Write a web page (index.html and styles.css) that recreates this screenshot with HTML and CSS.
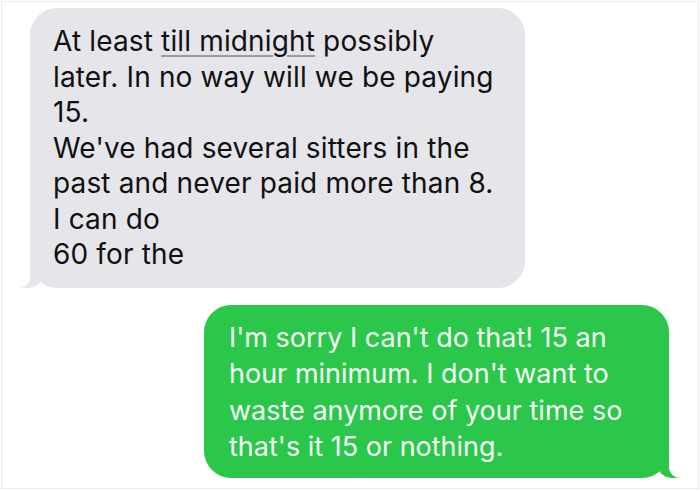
FILE: index.html
```html
<!DOCTYPE html>
<html lang="en">
<head>
    <meta charset="UTF-8">
    <meta name="viewport" content="width=device-width, initial-scale=1.0">
    <title>Messages</title>
    <link rel="stylesheet" href="styles.css">
</head>
<body>

    <div class="thread">
        <div class="bubble received">
            At least <span class="link">till midnight</span> possibly<br>
            later. In no way will we be paying<br>
            15.<br>
            We've had several sitters in the<br>
            past and never paid more than 8.<br>
            I can do<br>
            60 for the
        </div>

        <div class="bubble sent">
            I'm sorry I can't do that! 15 an<br>
            hour minimum. I don't want to<br>
            waste anymore of your time so<br>
            that's it 15 or nothing.
        </div>
    </div>

</body>
</html>
```

FILE: styles.css
```css
body {
    margin: 0;
    background-color: #ffffff;
    font-family: Inter, "Noto Sans", "Liberation Sans", sans-serif;
}
.thread {
    box-sizing: border-box;
    width: 698px;
    height: 488px;
    margin: 1px;
    border: 1px solid #ececec;
    display: flex;
    flex-direction: column;
    align-items: flex-start;
    gap: 17px;
    padding: 6px 29px 0 28px;
}
.bubble {
    position: relative;
    box-sizing: border-box;
    border-radius: 27px;
    font-size: 28px;
    white-space: nowrap;
}
.received {
    width: 495px;
    padding: 16px 20px 15px 23px;
    line-height: 35.5px;
    letter-spacing: 0.15px;
    background-color: #e5e5ea;
    color: #111111;
}
.sent {
    align-self: flex-end;
    width: 465px;
    padding: 15px 20px 12px 25px;
    font-size: 27px;
    line-height: 36.5px;
    background-color: #2bc74b;
    color: #f6fff6;
}
.link {
    text-decoration: underline;
    text-decoration-color: #9a9aa0;
    text-decoration-thickness: 2px;
    text-underline-offset: 4px;
}

/* bubble tails: a coloured block with a white mask cut over it */
.bubble::before,
.bubble::after {
    content: "";
    position: absolute;
    bottom: 0;
    height: 26px;
}
.received::before {
    left: -9px;
    width: 22px;
    background-color: #e5e5ea;
    border-bottom-right-radius: 16px 14px;
}
.received::after {
    left: -28px;
    width: 28px;
    background-color: #ffffff;
    border-bottom-right-radius: 11px;
}
.sent::before {
    right: -12px;
    width: 24px;
    background-color: #2bc74b;
    border-bottom-left-radius: 16px 14px;
}
.sent::after {
    right: -28px;
    width: 28px;
    background-color: #ffffff;
    border-bottom-left-radius: 11px;
}
```
